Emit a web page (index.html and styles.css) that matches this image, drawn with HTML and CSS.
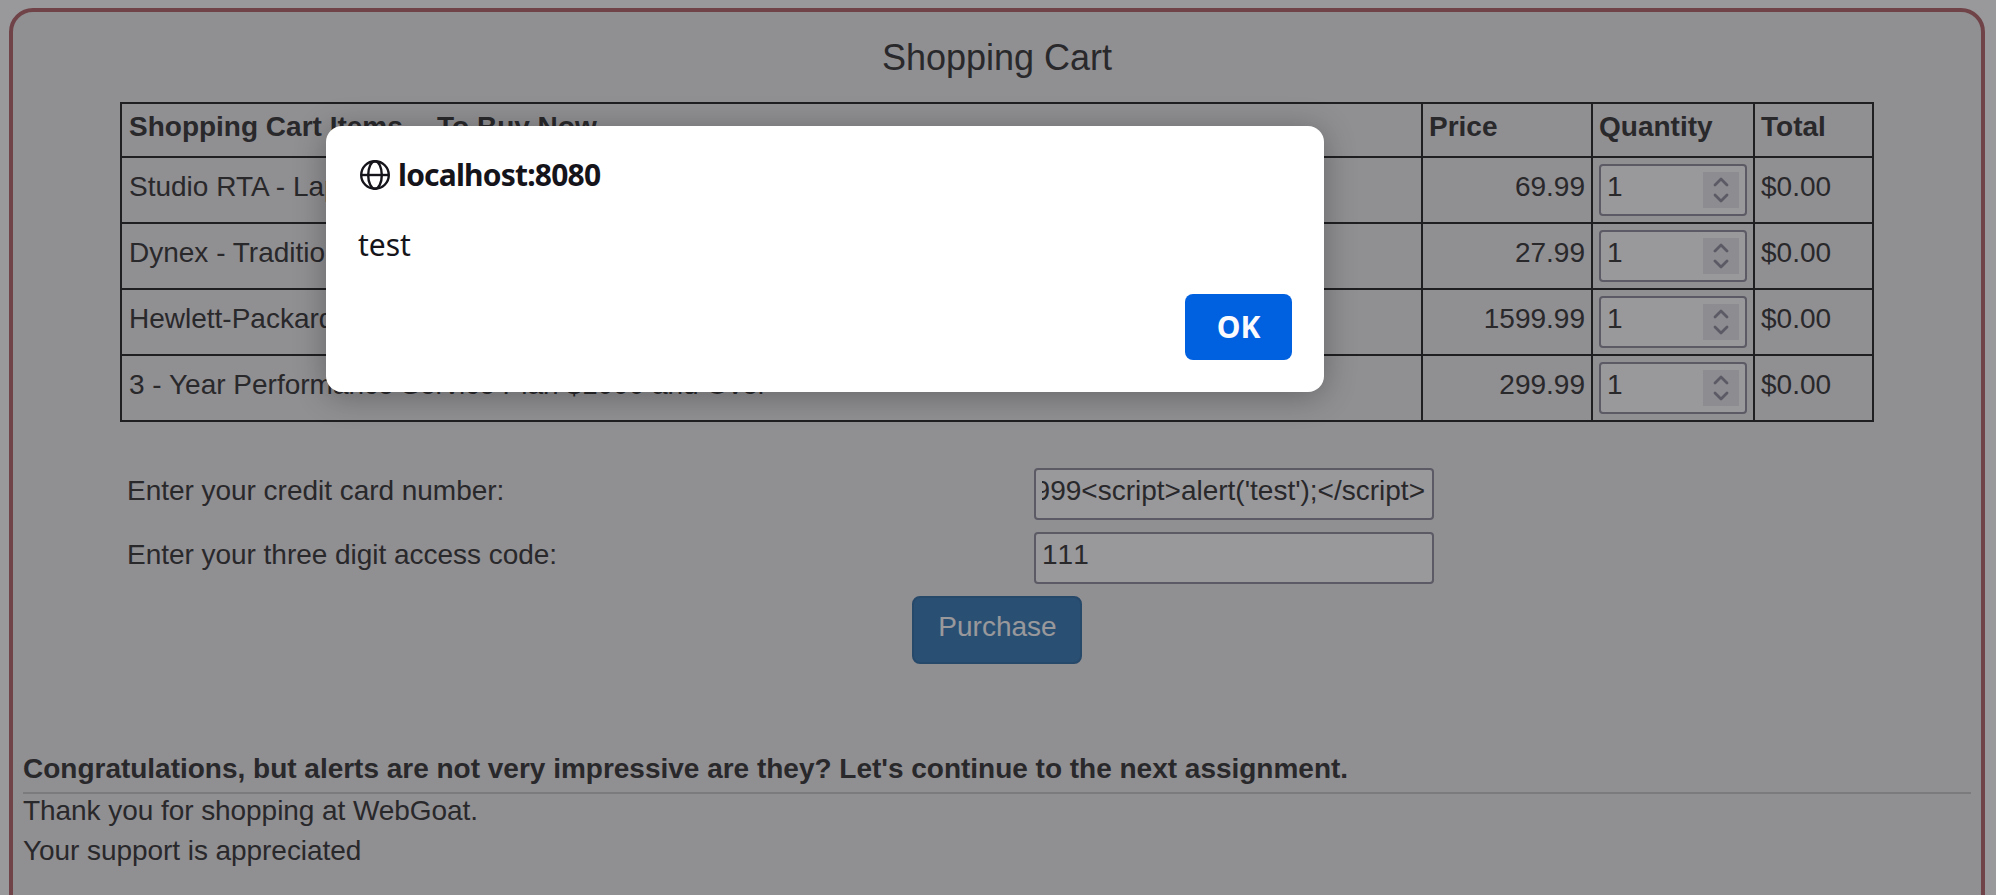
FILE: index.html
```html
<!DOCTYPE html>
<html lang="en">
<head>
<meta charset="utf-8">
<title>Shopping Cart</title>
<link rel="stylesheet" href="styles.css">
</head>
<body>
<main class="attack">
  <h1 class="title">Shopping Cart</h1>
  <table class="cart">
    <colgroup><col class="c-item"><col class="c-price"><col class="c-qty"><col class="c-total"></colgroup>
    <tr class="head"><th>Shopping Cart Items -- To Buy Now</th><th>Price</th><th>Quantity</th><th>Total</th></tr>
    <tr><td>Studio RTA - Laptop/Reading Cart with Tilting Surface - Cherry</td><td class="num">69.99</td><td><div class="qty"><span>1</span><svg class="spin" viewBox="0 0 36 36"><path d="M12 13l6-6 6 6M12 23l6 6 6-6"/></svg></div></td><td>$0.00</td></tr>
    <tr><td>Dynex - Traditional Notebook Case</td><td class="num">27.99</td><td><div class="qty"><span>1</span><svg class="spin" viewBox="0 0 36 36"><path d="M12 13l6-6 6 6M12 23l6 6 6-6"/></svg></div></td><td>$0.00</td></tr>
    <tr><td>Hewlett-Packard - Pavilion Notebook with Intel Centrino</td><td class="num">1599.99</td><td><div class="qty"><span>1</span><svg class="spin" viewBox="0 0 36 36"><path d="M12 13l6-6 6 6M12 23l6 6 6-6"/></svg></div></td><td>$0.00</td></tr>
    <tr><td>3 - Year Performance Service Plan $1000 and Over</td><td class="num">299.99</td><td><div class="qty"><span>1</span><svg class="spin" viewBox="0 0 36 36"><path d="M12 13l6-6 6 6M12 23l6 6 6-6"/></svg></div></td><td>$0.00</td></tr>
  </table>
  <div class="form">
    <div class="row"><span>Enter your credit card number:</span><div class="field"><div class="clip end"><span>999&lt;script&gt;alert('test');&lt;/script&gt;</span></div></div></div>
    <div class="row"><span>Enter your three digit access code:</span><div class="field"><div class="clip code"><span>111</span></div></div></div>
  </div>
  <button class="buy">Purchase</button>
  <p class="feedback">Congratulations, but alerts are not very impressive are they? Let's continue to the next assignment.</p>
  <p class="output">Thank you for shopping at WebGoat.<br>Your support is appreciated</p>
</main>
<div class="overlay"></div>
<div class="dialog">
  <div class="host">
    <svg class="globe" viewBox="0 0 30 30"><circle cx="15" cy="15" r="13.8"/><ellipse cx="15" cy="15" rx="6.8" ry="13.8"/><path d="M1 15h28"/></svg>
    <span>localhost:8080</span>
  </div>
  <div class="message">test</div>
  <button class="ok">OK</button>
</div>
</body>
</html>
```
FILE: styles.css
```css
* { box-sizing: border-box; }
body {
  margin: 0;
  height: 895px;
  overflow: hidden;
  background: #fff;
  color: #333;
  font: 28px/40px "Liberation Sans", Arial, sans-serif;
}
.attack {
  margin: 8px 11px 0 9px;
  height: 920px;
  padding: 0 10px;
  border: 4px solid #b36468;
  border-radius: 24px;
  background: #eee;
}
.title {
  margin: 0;
  padding-top: 26px;
  height: 90px;
  font-size: 36px;
  font-weight: 400;
  line-height: 40px;
  text-align: center;
}
.cart {
  width: 1752px;
  margin: 0 0 0 97px;
  border-collapse: collapse;
  table-layout: fixed;
}
.c-item { width: 1301px; }
.c-price { width: 170px; }
.c-qty { width: 162px; }
.c-total { width: 119px; }
.cart th, .cart td {
  height: 66px;
  padding: 3px 7px 0 6px;
  border: 2px solid #222;
  text-align: left;
  vertical-align: top;
  white-space: nowrap;
}
.cart .head th { height: 54px; }
.cart tr > :first-child { padding-left: 7px; }
.cart td { padding-top: 6px; line-height: 46px; }
.cart .num { padding-right: 6px; text-align: right; }
.qty {
  display: flex;
  align-items: center;
  justify-content: space-between;
  width: 148px;
  height: 52px;
  padding: 0 6px;
  border: 2px solid #8f8f9d;
  border-radius: 4px;
  background: #fff;
}
.qty span { height: 50px; line-height: 44px; }
.spin {
  width: 36px;
  height: 36px;
  background: #e9e9ed;
  fill: none;
  stroke: #8f8f9d;
  stroke-width: 2.8;
  stroke-linecap: round;
  stroke-linejoin: round;
}
.form {
  display: flex;
  flex-direction: column;
  gap: 12px;
  margin: 46px 0 12px 104px;
}
.row {
  display: grid;
  grid-template-columns: 907px 400px;
  height: 52px;
  line-height: 46px;
  letter-spacing: -.03px;
}
.field {
  height: 52px;
  padding: 0 6px;
  border: 2px solid #8f8f9d;
  border-radius: 4px;
  background: #fff;
  letter-spacing: 0;
}
.clip {
  display: flex;
  height: 48px;
  overflow: hidden;
  line-height: 42px;
  white-space: nowrap;
}
.end { justify-content: flex-end; padding-right: 1px; }
.code { font-kerning: none; }
.buy {
  display: block;
  width: 170px;
  height: 68px;
  margin: 0 auto;
  padding: 0 0 6px 1px;
  border: 2px solid #2e6da4;
  border-radius: 8px;
  background: #337ab7;
  color: #fff;
  font: inherit;
}
.feedback {
  margin: 85px 0 0;
  height: 45px;
  border-bottom: 2px solid #c8c8c8;
  font-weight: 700;
  letter-spacing: -.01px;
}
.output { margin: -3px 0 0; letter-spacing: -.06px; }
.overlay {
  position: absolute;
  inset: 0;
  background: rgba(28, 27, 34, .45);
}
.dialog {
  position: absolute;
  left: 326px;
  top: 126px;
  display: flex;
  flex-direction: column;
  width: 998px;
  height: 266px;
  padding: 32px;
  border-radius: 16px;
  background: #fff;
  box-shadow: 0 4px 32px rgba(0, 0, 0, .3);
  color: #15141a;
  font: 30px/36px "Noto Sans", sans-serif;
}
.host {
  display: flex;
  align-items: center;
  gap: 8px;
  padding-left: 2px;
  height: 34px;
  font-weight: 700;
}
.host span { letter-spacing: -.8px; }
.globe {
  width: 30px;
  height: 30px;
  fill: none;
  stroke: #15141a;
  stroke-width: 2.4;
}
.message { margin-top: 35px; }
.ok {
  align-self: flex-end;
  width: 107px;
  height: 66px;
  margin-top: 31px;
  padding: 0;
  border: 0;
  border-radius: 8px;
  background: #0061e0;
  color: #fbfbfe;
  font: 700 30px/66px "Noto Sans", sans-serif;
}
```
